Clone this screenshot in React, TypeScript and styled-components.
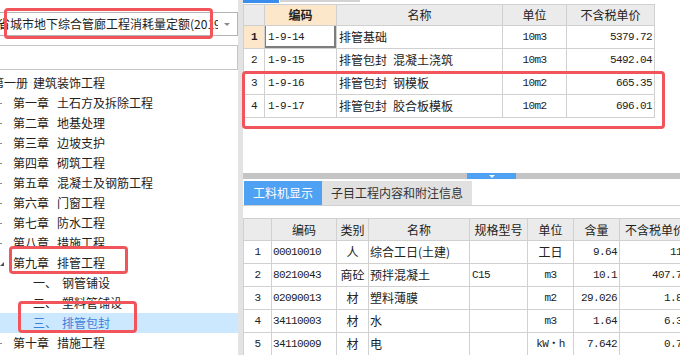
import React from 'react';
import styled, { createGlobalStyle } from 'styled-components';

const CJK = `"Noto Sans CJK SC", "Noto Sans", sans-serif`;
const MONO = `"Liberation Mono", "Noto Sans CJK SC", monospace`;

const GlobalStyle = createGlobalStyle`
  html, body { margin: 0; padding: 0; background: #fff; }
  body { font-family: ${CJK}; }
`;

const Root = styled.div`
  position: relative;
  width: 680px;
  height: 355px;
  overflow: hidden;
  display: flex;
  background: #fff;
  font-family: ${CJK};
  font-size: 12px;
  line-height: 16px;
  color: #222;
`;

/* ---------- left panel ---------- */
const LeftPanel = styled.div`
  width: 238px;
  flex: none;
  display: flex;
  flex-direction: column;
  padding-top: 12px;
  box-sizing: border-box;
  overflow: hidden;
`;

const Dropdown = styled.div`
  height: 24px;
  margin-left: -2px;
  border: 1px solid #b4b4b4;
  display: flex;
  align-items: center;
  box-sizing: border-box;
  background: #fff;
`;

const DropText = styled.div`
  width: 219px;
  overflow: hidden;
  white-space: nowrap;
  text-indent: -3px;
  padding-left: 2px;
  box-sizing: border-box;
`;

const DropArrow = styled.div`
  margin-left: 6px;
  width: 0;
  height: 0;
  border-left: 3px solid transparent;
  border-right: 3px solid transparent;
  border-top: 3px solid #8a8a8a;
`;

const SearchBox = styled.div`
  height: 25px;
  margin-top: 9px;
  margin-left: -2px;
  border: 1px solid #c4c4c4;
  box-sizing: border-box;
`;

const Tree = styled.div`
  margin-top: 3px;
  display: flex;
  flex-direction: column;
`;

const TreeRow = styled.div<{ $pad: number; $selected?: boolean }>`
  height: 20px;
  display: flex;
  align-items: center;
  white-space: nowrap;
  padding-left: ${p => p.$pad}px;
  background: ${p => (p.$selected ? '#cce8ff' : 'transparent')};
  color: ${p => (p.$selected ? '#3d7fd9' : '#222')};
`;

const ExpanderSlot = styled.div`
  width: 13px;
  flex: none;
  display: flex;
  align-items: center;
`;

const Dot = styled.div`
  width: 2px;
  height: 1px;
  background: #8a8a8a;
`;

const OpenMark = styled.div`
  width: 0;
  height: 0;
  margin-top: 2px;
  border-left: 4px solid transparent;
  border-bottom: 4px solid #505050;
`;

const Label = styled.span<{ $shift: number }>`
  margin-left: ${p => p.$shift}px;
`;

const Name = styled.span<{ $gap: number }>`
  margin-left: ${p => p.$gap}px;
`;

/* ---------- divider ---------- */
const Divider = styled.div`
  width: 5px;
  flex: none;
  background: #e3e3e3;
`;

/* ---------- right panel ---------- */
const RightPanel = styled.div`
  flex: 1;
  min-width: 0;
  display: flex;
  flex-direction: column;
  overflow: hidden;
`;

const TopStrip = styled.div`
  height: 4px;
  flex: none;
  display: flex;
  align-items: flex-start;
`;

const StripSeg = styled.div<{ $w: number; $color: string; $h: number }>`
  width: ${p => p.$w}px;
  height: ${p => p.$h}px;
  background: ${p => p.$color};
  margin-right: 1px;
`;

const TopArea = styled.div`
  height: 169px;
  flex: none;
`;

const Grid = styled.div<{ $cols: string; $head: number }>`
  display: grid;
  grid-template-columns: ${p => p.$cols};
  grid-template-rows: ${p => p.$head}px;
  grid-auto-rows: 23px;
  width: max-content;
  border-left: 1px solid #d0d0d0;
  border-top: 1px solid #d0d0d0;
`;

const Cell = styled.div<{
  $align?: 'left' | 'center' | 'right';
  $head?: boolean;
  $hl?: boolean;
  $bold?: boolean;
  $mono?: boolean;
  $focus?: boolean;
  $pad?: number;
}>`
  box-sizing: border-box;
  border-right: 1px solid #d0d0d0;
  border-bottom: 1px solid #d0d0d0;
  display: flex;
  align-items: center;
  justify-content: ${p =>
    p.$align === 'center' ? 'center' : p.$align === 'right' ? 'flex-end' : 'flex-start'};
  padding: 0 ${p => p.$pad ?? 2}px;
  white-space: pre;
  overflow: hidden;
  background: ${p => (p.$hl ? '#fde7cb' : p.$head ? '#ebebeb' : '#fff')};
  font-weight: ${p => (p.$bold ? 700 : 400)};
  font-family: ${p => (p.$mono ? MONO : CJK)};
  font-size: ${p => (p.$mono ? '11px' : '12px')};
  letter-spacing: ${p => (p.$mono ? '-0.6px' : '0')};
  color: #222;
  box-shadow: ${p => (p.$focus ? 'inset 1px 0 0 #3b8ded, inset -2px -2px 0 #7d7d7d' : 'none')};
`;

const Splitter = styled.div`
  height: 6px;
  flex: none;
  background: #c4c4c4;
  display: flex;
`;

const SplitHandle = styled.div`
  margin-left: 224px;
  width: 49px;
  background: #4ea1f3;
  display: flex;
  justify-content: center;
`;

const SplitArrow = styled.div`
  margin-top: 2px;
  width: 0;
  height: 0;
  border-left: 3px solid transparent;
  border-right: 3px solid transparent;
  border-top: 3px solid #fff;
`;

const TabBar = styled.div`
  margin-top: 2px;
  height: 24px;
  flex: none;
  display: flex;
  padding-left: 1px;
  border-bottom: 1px solid #cfcfcf;
`;

const Tab = styled.div<{ $active?: boolean }>`
  display: flex;
  align-items: center;
  padding: 0 9px;
  white-space: nowrap;
  font-size: 12px;
  background: ${p => (p.$active ? '#4ea1f3' : '#e1e1e1')};
  color: ${p => (p.$active ? '#fff' : '#333')};
`;

const BottomWrap = styled.div`
  margin-top: 12px;
`;

const RedBox = styled.div<{ $x: number; $y: number; $w: number; $h: number }>`
  position: absolute;
  left: ${p => p.$x}px;
  top: ${p => p.$y}px;
  width: ${p => p.$w}px;
  height: ${p => p.$h}px;
  border: 3px solid #f1545b;
  border-radius: 4px;
  box-sizing: border-box;
  pointer-events: none;
`;

/* ---------- data ---------- */
type TreeItem = {
  level: 0 | 1 | 2;
  label: string;
  name: string;
  mark?: 'dot' | 'open';
  selected?: boolean;
};

const treeItems: TreeItem[] = [
  { level: 0, label: '第一册', name: '建筑装饰工程' },
  { level: 1, label: '第一章', name: '土石方及拆除工程', mark: 'dot' },
  { level: 1, label: '第二章', name: '地基处理', mark: 'dot' },
  { level: 1, label: '第三章', name: '边坡支护', mark: 'dot' },
  { level: 1, label: '第四章', name: '砌筑工程', mark: 'dot' },
  { level: 1, label: '第五章', name: '混凝土及钢筋工程', mark: 'dot' },
  { level: 1, label: '第六章', name: '门窗工程', mark: 'dot' },
  { level: 1, label: '第七章', name: '防水工程', mark: 'dot' },
  { level: 1, label: '第八章', name: '措施工程', mark: 'dot' },
  { level: 1, label: '第九章', name: '排管工程', mark: 'open' },
  { level: 2, label: '一、', name: '钢管铺设' },
  { level: 2, label: '二、', name: '塑料管铺设' },
  { level: 2, label: '三、', name: '排管包封', selected: true },
  { level: 1, label: '第十章', name: '措施工程', mark: 'dot' },
];

const topRows = [
  { code: '1-9-14', name: '排管基础', unit: '10m3', price: '5379.72' },
  { code: '1-9-15', name: '排管包封\u2002混凝土浇筑', unit: '10m3', price: '5492.04' },
  { code: '1-9-16', name: '排管包封\u2002钢模板', unit: '10m2', price: '665.35' },
  { code: '1-9-17', name: '排管包封\u2002胶合板模板', unit: '10m2', price: '696.01' },
];

const bottomRows = [
  { code: '00010010', type: '人', name: '综合工日(土建)', spec: '', unit: '工日', qty: '9.64', price: '113' },
  { code: '80210043', type: '商砼', name: '预拌混凝土', spec: 'C15', unit: 'm3', qty: '10.1', price: '407.77' },
  { code: '02090013', type: '材', name: '塑料薄膜', spec: '', unit: 'm2', qty: '29.026', price: '1.85' },
  { code: '34110003', type: '材', name: '水', spec: '', unit: 'm3', qty: '1.64', price: '6.35' },
  { code: '34110009', type: '材', name: '电', spec: '', unit: 'kW・h', qty: '7.642', price: '0.73' },
];

const isLatin = (s: string) => /^[\x00-\x7F・]+$/.test(s);

function TreeView() {
  return (
    <Tree>
      {treeItems.map((it, i) => {
        if (it.level === 0) {
          return (
            <TreeRow key={i} $pad={0}>
              <Label $shift={-8}>{it.label}</Label>
              <Name $gap={5}>{it.name}</Name>
            </TreeRow>
          );
        }
        if (it.level === 1) {
          return (
            <TreeRow key={i} $pad={0}>
              <ExpanderSlot>{it.mark === 'open' ? <OpenMark /> : <Dot />}</ExpanderSlot>
              <Label $shift={0}>{it.label}</Label>
              <Name $gap={8}>{it.name}</Name>
            </TreeRow>
          );
        }
        return (
          <TreeRow key={i} $pad={33} $selected={it.selected}>
            <Label $shift={0}>{it.label}</Label>
            <Name $gap={5}>{it.name}</Name>
          </TreeRow>
        );
      })}
    </Tree>
  );
}

function TopTable() {
  return (
    <Grid $cols="21px 72px 166px 64px 88px" $head={21}>
      <Cell $head />
      <Cell $head $hl $bold $align="center">编码</Cell>
      <Cell $head $align="center">名称</Cell>
      <Cell $head $align="center">单位</Cell>
      <Cell $head $align="center">不含税单价</Cell>
      {topRows.map((r, i) => (
        <React.Fragment key={r.code}>
          <Cell $mono $align="center" $hl={i === 0} $bold={i === 0}>{i + 1}</Cell>
          <Cell $mono $focus={i === 0} $pad={3}>{r.code}</Cell>
          <Cell>{r.name}</Cell>
          <Cell $mono $align="center">{r.unit}</Cell>
          <Cell $mono $align="right">{r.price}</Cell>
        </React.Fragment>
      ))}
    </Grid>
  );
}

function BottomTable() {
  return (
    <Grid $cols="28px 65px 32px 101px 58px 46px 46px 72px" $head={22}>
      <Cell $head />
      <Cell $head $align="center">编码</Cell>
      <Cell $head $align="center">类别</Cell>
      <Cell $head $align="center">名称</Cell>
      <Cell $head $align="center">规格型号</Cell>
      <Cell $head $align="center">单位</Cell>
      <Cell $head $align="center">含量</Cell>
      <Cell $head $align="left" $pad={5}>不含税单价</Cell>
      {bottomRows.map((r, i) => (
        <React.Fragment key={r.code}>
          <Cell $mono $align="center">{i + 1}</Cell>
          <Cell $mono $pad={1}>{r.code}</Cell>
          <Cell $align="center" $pad={0}>{r.type}</Cell>
          <Cell $pad={1}>{r.name}</Cell>
          <Cell $mono>{r.spec}</Cell>
          <Cell $mono={isLatin(r.unit)} $align="center">{r.unit}</Cell>
          <Cell $mono $align="right">{r.qty}</Cell>
          <Cell $mono $align="right" $pad={3}>{r.price}</Cell>
        </React.Fragment>
      ))}
    </Grid>
  );
}

export default function App() {
  return (
    <>
      <GlobalStyle />
      <Root>
        <LeftPanel>
          <Dropdown>
            <DropText>省城市地下综合管廊工程消耗量定额(2019)</DropText>
            <DropArrow />
          </Dropdown>
          <SearchBox />
          <TreeView />
        </LeftPanel>
        <Divider />
        <RightPanel>
          <TopStrip>
            <StripSeg $w={36} $h={3} $color="#3b8ded" />
            <StripSeg $w={80} $h={2} $color="#d3d3d3" />
          </TopStrip>
          <TopArea>
            <TopTable />
          </TopArea>
          <Splitter>
            <SplitHandle>
              <SplitArrow />
            </SplitHandle>
          </Splitter>
          <TabBar>
            <Tab $active>工料机显示</Tab>
            <Tab>子目工程内容和附注信息</Tab>
          </TabBar>
          <BottomWrap>
            <BottomTable />
          </BottomWrap>
        </RightPanel>
        <RedBox $x={4} $y={8} $w={209} $h={31} />
        <RedBox $x={9} $y={246} $w={119} $h={28} />
        <RedBox $x={18} $y={301} $w={119} $h={32} />
        <RedBox $x={242} $y={71} $w={423} $h={58} />
      </Root>
    </>
  );
}
